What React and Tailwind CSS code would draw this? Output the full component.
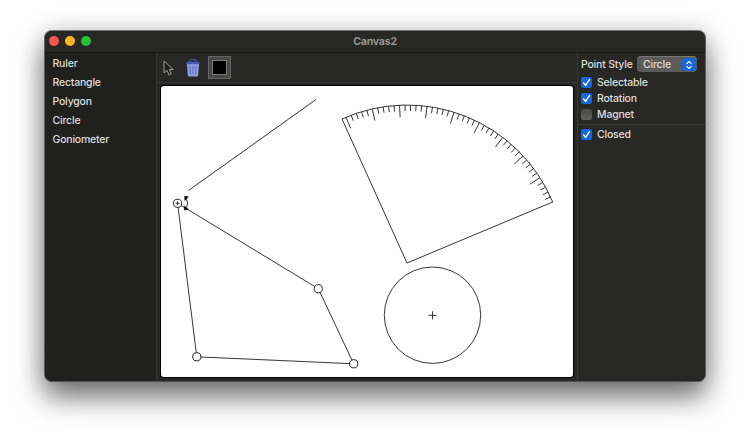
import React from 'react';

const tools = ['Ruler', 'Rectangle', 'Polygon', 'Circle', 'Goniometer'];

function TitleBar() {
  return (
    <header className="grid h-[22px] shrink-0 grid-cols-3 items-center border-b border-[#161614] bg-[#272725] px-[4px]">
      <div className="flex gap-[6px] pb-px">
        <span className="h-[10px] w-[10px] rounded-full bg-[#ff544d]" />
        <span className="h-[10px] w-[10px] rounded-full bg-[#fdb32a]" />
        <span className="h-[10px] w-[10px] rounded-full bg-[#27c23a]" />
      </div>
      <h1 className="text-center text-[10.5px] leading-[14px] font-bold tracking-[-0.2px] text-[#949492]">Canvas2</h1>
    </header>
  );
}

function Toolbar() {
  return (
    <div className="flex h-[30px] shrink-0 items-center border-b border-[#373735] pl-[5px]">
      <svg className="h-[18px] w-[14px]" viewBox="0 0 14 18">
        <path d="M2 2v12l3-2.7 2 4.7 2.3-1-2-4.5h3.9z" fill="#1d1d1b" stroke="#aaa9a7" strokeWidth="0.9" />
      </svg>
      <svg className="ml-[9px] h-[20px] w-[16px]" viewBox="0 0 16 20">
        <path d="M5 3.5V2.3q0-.8.8-.8h4.4q.8 0 .8.8v1.2" fill="none" stroke="#4453a9" strokeWidth="1.2" />
        <path d="M2 6h12l-.8 11.2q-.1 1.3-1.3 1.3H4.1q-1.2 0-1.3-1.3z" fill="#8f9de2" />
        <path d="M1.2 6.2q0-2.7 2.3-2.7h9q2.3 0 2.3 2.7z" fill="#4657b7" />
        <path d="M5 8l.3 8.5M8 8v8.5M11 8l-.3 8.5" stroke="#5868bd" strokeWidth="1" />
      </svg>
      <div className="ml-[7px] flex h-[23px] w-[23px] items-center justify-center border border-[#646462] bg-[#484846]">
        <div className="h-[15px] w-[15px] border border-[#777775] bg-black" />
      </div>
    </div>
  );
}

const ORIGIN = { x: 407, y: 263 };
const RADIUS = 158;
const ticks = Array.from({ length: 46 }, (_, i) => {
  const a = ((22.7 + i * 2) * Math.PI) / 180;
  const inner = RADIUS - (i % 5 === 0 ? 12 : 6);
  return {
    x1: ORIGIN.x + RADIUS * Math.cos(a),
    y1: ORIGIN.y - RADIUS * Math.sin(a),
    x2: ORIGIN.x + inner * Math.cos(a),
    y2: ORIGIN.y - inner * Math.sin(a),
  };
}).slice(1);

function Drawing() {
  return (
    <svg className="block h-[291px] w-[412px] rounded-[3px] bg-white" viewBox="161 86 412 291" fill="none" stroke="#202020" strokeWidth="0.9">
      <path d="M188.5 190.5L316 99.5" />
      <path d="M177.6 203.3L318.3 288.7 353.7 363.8 196.8 356.8z" />
      <path d="M407 263L342 119A158 158 0 0 1 552.7 202z" />
      {ticks.map((t, i) => (
        <line key={i} x1={t.x1} y1={t.y1} x2={t.x2} y2={t.y2} />
      ))}
      <circle cx="432.5" cy="315.2" r="48.2" />
      <path d="M428.5 315.3h8M432.5 311.3v8" />
      <g fill="#fff" strokeWidth="1">
        <circle cx="177.6" cy="203.3" r="4.1" />
        <circle cx="318.3" cy="288.7" r="4.1" />
        <circle cx="353.7" cy="363.8" r="4.1" />
        <circle cx="196.8" cy="356.8" r="4.1" />
      </g>
      <path d="M175.6 203.3h4M177.6 201.3v4" />
      <path d="M186.4 198.5q2.2 4.5 .2 9" />
      <path d="M184.6 196.4l3.8.2-3.5 3.8zM184.3 206l4 3.3-4 .8z" fill="#000" stroke="#000" strokeWidth="0.6" />
    </svg>
  );
}

function Check({ label, checked }) {
  return (
    <div className="flex h-4 items-center gap-[5px]">
      {checked ? (
        <span className="flex h-[11px] w-[11px] items-center justify-center rounded-[2.5px] bg-[#1767dc]">
          <svg className="h-[9px] w-[9px]" viewBox="0 0 9 9" fill="none" stroke="#fff" strokeWidth="1.4" strokeLinecap="round" strokeLinejoin="round">
            <path d="M1.6 4.9l2 2.4L7.4 1.6" />
          </svg>
        </span>
      ) : (
        <span className="h-[11px] w-[11px] rounded-[2.5px] bg-linear-to-b from-[#494947] to-[#60605e]" />
      )}
      <span className="pt-[2px]">{label}</span>
    </div>
  );
}

function Inspector() {
  return (
    <aside className="flex w-[128px] shrink-0 flex-col border-l border-[#373735] bg-[#272725] pt-[3px]">
      <div className="flex h-4 items-center justify-between pr-[8px] pl-[3px]">
        <span className="pt-[2px] whitespace-nowrap">Point Style</span>
        <div className="flex h-4 w-[60px] items-center justify-between rounded-[4px] border-t border-[#777775] bg-[#5b5b59] pr-[1px] pl-[6px]">
          <span>Circle</span>
          <span className="flex h-[13px] w-[14px] items-center justify-center rounded-[3px] bg-[#1767dc]">
            <svg className="h-[10px] w-[8px]" viewBox="0 0 8 10" fill="none" stroke="#fff" strokeWidth="1.1" strokeLinecap="round" strokeLinejoin="round">
              <path d="M1.7 3.7L4 1.5l2.3 2.2M1.7 6.3L4 8.5l2.3-2.2" />
            </svg>
          </span>
        </div>
      </div>
      <div className="flex flex-col border-b border-[#3c3c3a] pt-[2px] pb-[2px] pl-[3px]">
        <Check label="Selectable" checked />
        <Check label="Rotation" checked />
        <Check label="Magnet" />
      </div>
      <div className="pt-[1px] pl-[3px]">
        <Check label="Closed" checked />
      </div>
    </aside>
  );
}

export default function App() {
  return (
    <div className="h-[440px] w-[750px] overflow-hidden bg-white pt-[30px] pl-[44px] font-[Inter,'Liberation_Sans',sans-serif]">
      <main className="flex h-[352px] w-[662px] flex-col overflow-hidden rounded-[8px] border border-t-[#777] border-r-[#5e5e5c] border-b-[#51514f] border-l-[#5e5e5c] bg-[#272725] text-[10.5px] leading-[14px] font-medium tracking-[-0.2px] text-[#dededc] shadow-[0_15px_28px_0px_rgba(0,0,0,0.55),0_0_26px_rgba(0,0,0,0.13)]">
        <TitleBar />
        <div className="flex min-h-0 flex-1">
          <nav className="w-[112px] shrink-0 border-r border-[#353533] bg-[#20201e] pt-px pl-[7.5px]">
            {tools.map((tool) => (
              <div key={tool} className="flex h-[19.1px] items-center">{tool}</div>
            ))}
          </nav>
          <section className="flex flex-1 flex-col">
            <Toolbar />
            <div className="pt-[3px] pl-[4px]">
              <div className="w-[412px] rounded-[3px] shadow-[0_0_0_1px_#000]">
                <Drawing />
              </div>
            </div>
          </section>
          <Inspector />
        </div>
      </main>
    </div>
  );
}
